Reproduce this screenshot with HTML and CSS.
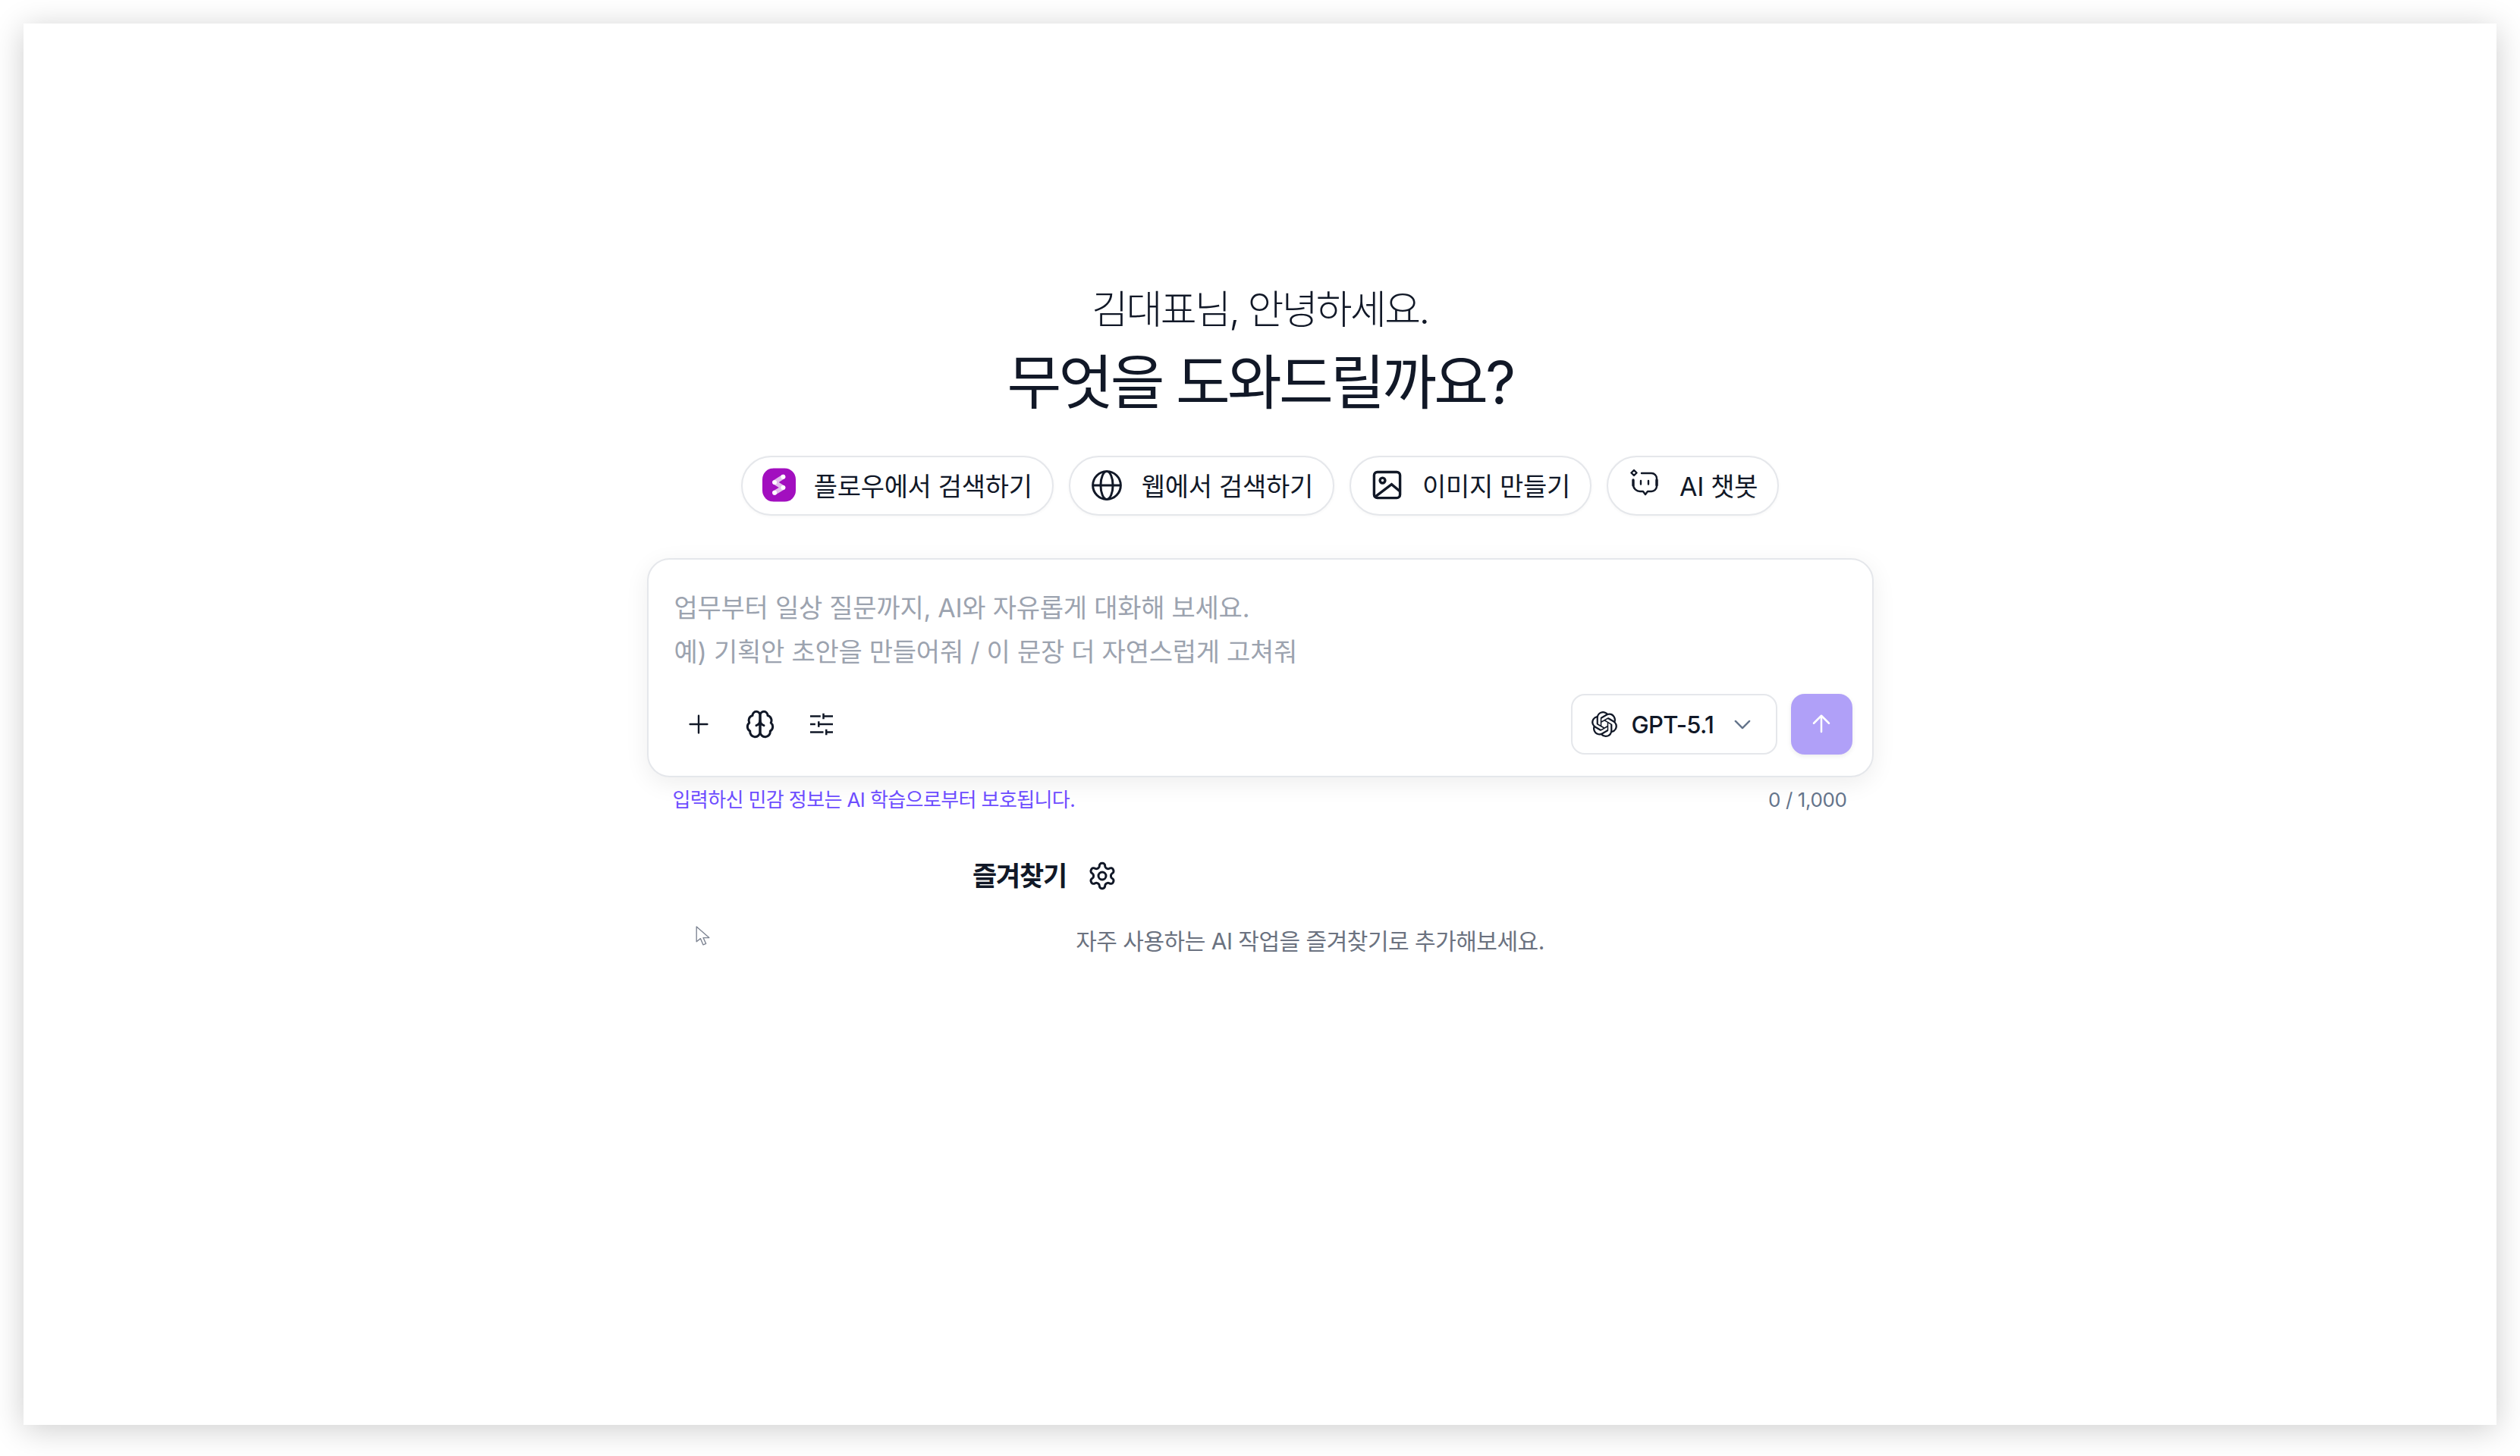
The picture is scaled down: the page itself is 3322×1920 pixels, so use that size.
FILE: index.html
```html
<!DOCTYPE html>
<html lang="ko">
<head>
    <meta charset="UTF-8">
    <meta name="viewport" content="width=device-width, initial-scale=1.0">
    <title>AI 채팅</title>
    <link rel="stylesheet" href="styles.css">
</head>
<body>
    <div class="window">
        <p class="greeting">김대표님, 안녕하세요.</p>
        <h1 class="headline">무엇을 도와드릴까요?</h1>

        <div class="chips">
            <button class="chip">
                <span class="chip-icon">
                    <svg class="flow-logo" viewBox="0 0 45 45">
                        <rect width="45" height="45" rx="15" fill="#a20fbf"/>
                        <path d="M28 11.5 L16.5 19 L28 26 L16.5 33" fill="none" stroke="#e3bdec" stroke-width="6" stroke-linecap="round" stroke-linejoin="round"/>
                        <circle cx="28" cy="11.5" r="3" fill="#fff"/>
                        <circle cx="16.5" cy="19" r="3" fill="#fff"/>
                        <circle cx="28" cy="26" r="3" fill="#fff"/>
                        <circle cx="16.5" cy="33" r="3" fill="#fff"/>
                    </svg>
                </span>
                플로우에서 검색하기
            </button>
            <button class="chip">
                <span class="chip-icon">
                    <svg class="icon-lg" viewBox="0 0 24 24" fill="none" stroke="currentColor" stroke-width="1.7">
                        <circle cx="12" cy="12" r="10.5"/>
                        <ellipse cx="12" cy="12" rx="4.6" ry="10.5"/>
                        <path d="M1.5 12h21"/>
                    </svg>
                </span>
                웹에서 검색하기
            </button>
            <button class="chip">
                <span class="chip-icon">
                    <svg class="icon-image" viewBox="0 0 24 24" fill="none" stroke="currentColor" stroke-width="2">
                        <rect x="2" y="2" width="20" height="20" rx="2.5"/>
                        <circle cx="8.5" cy="8.5" r="2"/>
                        <path d="M3 21 L15.5 11.5 L22 17"/>
                    </svg>
                </span>
                이미지 만들기
            </button>
            <button class="chip">
                <span class="chip-icon chip-icon-up">
                    <svg class="icon-bot" viewBox="0 0 39 35" fill="none" stroke="currentColor" stroke-width="2.4" stroke-linecap="round" stroke-linejoin="round">
                        <path d="M15 5h13a7 7 0 0 1 7 7v10a7 7 0 0 1-7 7h-5l-3 4-3-4h-4a9 9 0 0 1-9-8"/>
                        <path d="M4 14v7M35 14v7" stroke-width="3.4"/>
                        <path d="M5 1 L8.5 4.5 L5 8 L1.5 4.5 Z"/>
                        <path d="M14 15v4.5M24 15v4.5"/>
                    </svg>
                </span>
                AI 챗봇
            </button>
        </div>

        <div class="composer">
            <div class="placeholder">
                업무부터 일상 질문까지, AI와 자유롭게 대화해 보세요.<br>
                예) 기획안 초안을 만들어줘 / 이 문장 더 자연스럽게 고쳐줘
            </div>
            <div class="composer-bar">
                <div class="tools">
                    <button class="tool">
                        <svg class="icon-plus" viewBox="0 0 24 24" fill="none" stroke="currentColor" stroke-width="2.2" stroke-linecap="round">
                            <path d="M12 1.5v21M1.5 12h21"/>
                        </svg>
                    </button>
                    <button class="tool">
                        <svg class="icon-md" viewBox="0 0 24 24" fill="none" stroke="currentColor" stroke-width="1.8" stroke-linecap="round" stroke-linejoin="round">
                            <path d="M12 5a3 3 0 1 0-5.997.125 4 4 0 0 0-2.526 5.77 4 4 0 0 0 .556 6.588A4 4 0 1 0 12 18Z"/>
                            <path d="M12 5a3 3 0 1 1 5.997.125 4 4 0 0 1 2.526 5.77 4 4 0 0 1-.556 6.588A4 4 0 1 1 12 18Z"/>
                            <path d="M15 13a4.5 4.5 0 0 1-3-4 4.5 4.5 0 0 1-3 4"/>
                        </svg>
                    </button>
                    <button class="tool">
                        <svg class="icon-sliders" viewBox="0 0 24 24" fill="none" stroke="currentColor" stroke-width="2">
                            <path d="M0 3.6h11M14 3.6H24M14 0.6v6"/>
                            <path d="M0 12h5.5M9 12H24M9 9v6"/>
                            <path d="M0 20.4h14M17 20.4H24M17 17.4v6"/>
                        </svg>
                    </button>
                </div>
                <div class="composer-actions">
                    <button class="model-select">
                        <svg class="model-logo" viewBox="0 0 24 24" fill="currentColor">
                            <path d="M22.2819 9.8211a5.9847 5.9847 0 0 0-.5157-4.9108 6.0462 6.0462 0 0 0-6.5098-2.9A6.0651 6.0651 0 0 0 4.9807 4.1818a5.9847 5.9847 0 0 0-3.9977 2.9 6.0462 6.0462 0 0 0 .7427 7.0966 5.98 5.98 0 0 0 .511 4.9107 6.051 6.051 0 0 0 6.5146 2.9001A5.9847 5.9847 0 0 0 13.2599 24a6.0557 6.0557 0 0 0 5.7718-4.2058 5.9894 5.9894 0 0 0 3.9977-2.9001 6.0557 6.0557 0 0 0-.7475-7.0729zm-9.022 12.6081a4.4755 4.4755 0 0 1-2.8764-1.0408l.1419-.0804 4.7783-2.7582a.7948.7948 0 0 0 .3927-.6813v-6.7369l2.02 1.1686a.071.071 0 0 1 .038.052v5.5826a4.504 4.504 0 0 1-4.4945 4.4944zm-9.6607-4.1254a4.4708 4.4708 0 0 1-.5346-3.0137l.142.0852 4.783 2.7582a.7712.7712 0 0 0 .7806 0l5.8428-3.3685v2.3324a.0804.0804 0 0 1-.0332.0615L9.74 19.9502a4.4992 4.4992 0 0 1-6.1408-1.6464zM2.3408 7.8956a4.485 4.485 0 0 1 2.3655-1.9728V11.6a.7664.7664 0 0 0 .3879.6765l5.8144 3.3543-2.0201 1.1685a.0757.0757 0 0 1-.071 0l-4.8303-2.7865A4.504 4.504 0 0 1 2.3408 7.872zm16.5963 3.8558L13.1038 8.364 15.1192 7.2a.0757.0757 0 0 1 .071 0l4.8303 2.7913a4.4944 4.4944 0 0 1-.6765 8.1042v-5.6772a.79.79 0 0 0-.407-.667zm2.0107-3.0231l-.142-.0852-4.7735-2.7818a.7759.7759 0 0 0-.7854 0L9.409 9.2297V6.8974a.0662.0662 0 0 1 .0284-.0615l4.8303-2.7866a4.4992 4.4992 0 0 1 6.6802 4.66zM8.3065 12.863l-2.02-1.1638a.0804.0804 0 0 1-.038-.0567V6.0742a4.4992 4.4992 0 0 1 7.3757-3.4537l-.142.0805L8.704 5.459a.7948.7948 0 0 0-.3927.6813zm1.0976-2.3654l2.602-1.4998 2.6069 1.4998v2.9994l-2.5974 1.4997-2.6067-1.4997Z"/>
                        </svg>
                        <span class="model-name">GPT-5.1</span>
                        <svg class="model-chevron" viewBox="0 0 24 14" fill="none" stroke="currentColor" stroke-width="2.6" stroke-linecap="round" stroke-linejoin="round">
                            <path d="M2 2l10 10L22 2"/>
                        </svg>
                    </button>
                    <button class="send">
                        <svg class="icon-send" viewBox="0 0 24 24" fill="none" stroke="currentColor" stroke-width="2" stroke-linecap="round" stroke-linejoin="round">
                            <path d="M12 20V3M4 11l8-8 8 8"/>
                        </svg>
                    </button>
                </div>
            </div>
        </div>

        <div class="composer-note">
            <span class="privacy">입력하신 민감 정보는 AI 학습으로부터 보호됩니다.</span>
            <span class="counter">0 / 1,000</span>
        </div>

        <div class="favorites">
            <div class="favorites-head">
                <h2>즐겨찾기</h2>
                <svg class="icon-md" viewBox="0 0 24 24" fill="none" stroke="currentColor" stroke-width="1.8" stroke-linecap="round" stroke-linejoin="round">
                    <path d="M12.22 2h-.44a2 2 0 0 0-2 2v.18a2 2 0 0 1-1 1.73l-.43.25a2 2 0 0 1-2 0l-.15-.08a2 2 0 0 0-2.73.73l-.22.38a2 2 0 0 0 .73 2.73l.15.1a2 2 0 0 1 1 1.72v.51a2 2 0 0 1-1 1.74l-.15.09a2 2 0 0 0-.73 2.73l.22.38a2 2 0 0 0 2.73.73l.15-.08a2 2 0 0 1 2 0l.43.25a2 2 0 0 1 1 1.73V20a2 2 0 0 0 2 2h.44a2 2 0 0 0 2-2v-.18a2 2 0 0 1 1-1.73l.43-.25a2 2 0 0 1 2 0l.15.08a2 2 0 0 0 2.73-.73l.22-.39a2 2 0 0 0-.73-2.73l-.15-.08a2 2 0 0 1-1-1.74v-.5a2 2 0 0 1 1-1.74l.15-.09a2 2 0 0 0 .73-2.73l-.22-.38a2 2 0 0 0-2.73-.73l-.15.08a2 2 0 0 1-2 0l-.43-.25a2 2 0 0 1-1-1.73V4a2 2 0 0 0-2-2z"/>
                    <circle cx="12" cy="12" r="3"/>
                </svg>
            </div>
            <p class="favorites-empty">자주 사용하는 AI 작업을 즐겨찾기로 추가해보세요.</p>
        </div>

        <svg class="cursor" viewBox="0 0 18 26" fill="#fff" stroke="#7d8492" stroke-width="1.3" stroke-linejoin="round">
            <path d="M1 1v19l5-4 3.5 8 3.5-1.5-3.5-7.5H17Z"/>
        </svg>
    </div>
</body>
</html>
```

FILE: styles.css
```css
* {
    box-sizing: border-box;
}
html, body {
    height: 100%;
}
body {
    margin: 0;
    background-color: #fff;
    overflow: hidden;
    font-family: 'Inter', 'Noto Sans CJK KR', sans-serif;
    color: #111827;
}
button {
    font: inherit;
    color: inherit;
    background: none;
    border: none;
    padding: 0;
    cursor: pointer;
}
.window {
    position: relative;
    margin: 31px;
    width: 3260px;
    height: 1848px;
    padding-top: 348px;
    background-color: #fff;
    box-shadow: 0 6px 40px rgba(0, 0, 0, 0.2);
    display: flex;
    flex-direction: column;
    align-items: center;
}
.greeting {
    margin: 0;
    font-size: 52px;
    line-height: 60px;
    font-weight: 300;
    letter-spacing: -2.6px;
    color: #111827;
}
.headline {
    margin: 21px 0 0;
    font-size: 78px;
    line-height: 90px;
    font-weight: 400;
    letter-spacing: -3.7px;
    color: #111827;
}
.chips {
    display: flex;
    gap: 20px;
    margin-top: 51px;
}
.chip {
    display: flex;
    align-items: center;
    gap: 24px;
    height: 79px;
    padding: 0 26px 2px;
    border: 2px solid #e5e7eb;
    border-radius: 40px;
    background-color: #fff;
    font-size: 34px;
    letter-spacing: -0.3px;
    white-space: nowrap;
    box-shadow: 0 1px 4px rgba(0, 0, 0, 0.04);
}
.chip-icon {
    display: flex;
    justify-content: center;
    align-items: center;
    width: 44px;
}
.chip-icon-up {
    margin-top: -6px;
}
.flow-logo {
    width: 45px;
    height: 45px;
}
.icon-lg {
    width: 42px;
    height: 42px;
}
.icon-image {
    width: 41px;
    height: 41px;
}
.icon-bot {
    width: 39px;
    height: 35px;
}
.icon-md {
    width: 40px;
    height: 40px;
}
.icon-sliders {
    width: 30px;
    height: 30px;
}
.icon-plus {
    width: 26px;
    height: 26px;
}
.composer {
    width: 1617px;
    height: 289px;
    margin-top: 56px;
    padding: 35px 26px 26px;
    border: 2px solid #e5e7eb;
    border-radius: 30px;
    background-color: #fff;
    box-shadow: 0 8px 32px rgba(0, 0, 0, 0.07);
}
.placeholder {
    padding-left: 8px;
    font-size: 34px;
    line-height: 58px;
    letter-spacing: -0.25px;
    color: #9ca3af;
}
.composer-bar {
    display: flex;
    justify-content: space-between;
    align-items: center;
    margin-top: 26px;
}
.tools {
    display: flex;
}
.tool {
    display: flex;
    justify-content: center;
    align-items: center;
    width: 81px;
    height: 80px;
}
.composer-actions {
    display: flex;
    gap: 18px;
}
.model-select {
    display: flex;
    align-items: center;
    width: 272px;
    height: 80px;
    padding-left: 25px;
    border: 2px solid #e5e7eb;
    border-radius: 18px;
    background-color: #fff;
}
.model-logo {
    width: 34px;
    height: 34px;
}
.model-name {
    margin-left: 19px;
    font-size: 31px;
    font-weight: 500;
    letter-spacing: -0.7px;
}
.model-chevron {
    width: 22px;
    height: 13px;
    margin-left: 27px;
    color: #64748b;
}
.send {
    display: flex;
    justify-content: center;
    align-items: center;
    width: 81px;
    height: 80px;
    border-radius: 18px;
    background-color: #b0a0f8;
    color: #fff;
    box-shadow: 0 2px 6px rgba(0, 0, 0, 0.08);
}
.icon-send {
    width: 30px;
    height: 30px;
}
.composer-note {
    display: flex;
    justify-content: space-between;
    width: 1617px;
    margin-top: 12px;
    padding: 0 35px 0 34px;
    line-height: 36px;
}
.privacy {
    font-size: 26px;
    letter-spacing: -0.6px;
    color: #6d4dff;
}
.counter {
    font-size: 26px;
    letter-spacing: -0.4px;
    color: #64748b;
}
.favorites {
    width: 890px;
    margin: 60px 0 0 132px;
}
.favorites-head {
    display: flex;
    align-items: center;
    gap: 27px;
}
.favorites-head h2 {
    margin: 0;
    font-size: 35px;
    line-height: 44px;
    font-weight: 700;
    letter-spacing: -1.2px;
}
.favorites-empty {
    margin: 42px 0 0;
    font-size: 30px;
    line-height: 44px;
    letter-spacing: -0.5px;
    text-align: center;
    color: #6b7280;
}
.cursor {
    position: absolute;
    left: 886px;
    top: 1190px;
    width: 19px;
    height: 27px;
}
```
